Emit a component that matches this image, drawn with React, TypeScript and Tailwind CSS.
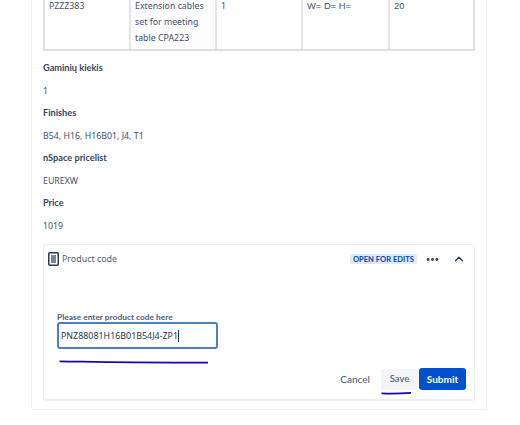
import { ChevronUp, MoreHorizontal } from 'lucide-react'

const font = { fontFamily: '"Noto Sans", sans-serif' }
const bold = { fontFamily: 'Lato, "Noto Sans", sans-serif' }

const cells = [
  { text: 'PZZZ383', width: 'w-[84px]' },
  { text: 'Extension cables set for meeting table CPA223', width: 'w-[86px]' },
  { text: '1', width: 'w-[86px]' },
  { text: 'W= D= H=', width: 'w-[87px]', arial: true },
  { text: '20', width: 'w-[85px]', arial: true },
]

const fields = [
  { label: 'Gaminių kiekis', value: '1' },
  { label: 'Finishes', value: 'B54, H16, H16B01, J4, T1' },
  { label: 'nSpace pricelist', value: 'EUREXW' },
  { label: 'Price', value: '1019' },
]

export default function App() {
  return (
    <div className="h-[425px] w-[520px] overflow-hidden bg-white text-[#42526e]" style={font}>
      <div className="ml-[31px] h-[412px] w-[456px] rounded-b-[3px] border-x border-b border-[#f0f1f3] pl-[11px] pr-[10px]">
        <div className="-mt-[2px] flex h-[53px] w-[432px] border-x-2 border-b-2 border-[#dcdee2]">
          {cells.map((c, i) => (
            <div
              key={c.text}
              className={`${c.width} shrink-0 pl-[4px] pr-[6px] leading-[16px] ${c.arial ? 'text-[9.4px]' : 'text-[8.8px]'} ${i > 0 ? 'border-l-2 border-[#e4e5e8]' : ''} ${i === 1 ? 'bg-[#fdfdfe]' : ''}`}
              style={c.arial ? { fontFamily: '"Liberation Sans", sans-serif' } : undefined}
            >
              {c.text}
            </div>
          ))}
        </div>

        <div className="mt-[9px] flex flex-col">
          {fields.map((f) => (
            <div key={f.label} className="flex flex-col">
              <div className="h-[23px] text-[9.2px] font-bold leading-[16px] text-[#344563]" style={bold}>
                {f.label}
              </div>
              <div className="h-[22px] text-[8.8px] leading-[16px]">{f.value}</div>
            </div>
          ))}
        </div>

        <div className="relative mt-[4px] h-[156px] w-[432px] rounded-[3px] border border-[#eceef0] shadow-[0_1px_1px_rgba(9,30,66,0.06)]">
          <div className="flex h-[28px] items-center pl-[4px] pr-[8px]">
            <svg width="11" height="14" viewBox="0 0 11 14" className="mr-[3px] shrink-0" fill="none">
              <rect x="0.75" y="0.75" width="9.5" height="12.5" rx="1" stroke="#253858" strokeWidth="1.5" />
              <rect x="3" y="3" width="5" height="8" fill="#7a869a" />
            </svg>
            <span className="text-[8.9px] text-[#505f79]">Product code</span>
            <span
              className="ml-auto rounded-[2px] bg-[#deebff] px-[3px] text-[7.6px] font-bold leading-[10px] text-[#0747a6]"
              style={bold}
            >
              OPEN FOR EDITS
            </span>
            <MoreHorizontal size={15} strokeWidth={2.6} className="ml-[8px] text-[#253858]" />
            <ChevronUp size={14} strokeWidth={2.2} className="ml-[12px] text-[#253858]" />
          </div>

          <div className="ml-[13px] mt-[38px] text-[8.4px] font-bold leading-[12px] text-[#505f79]" style={bold}>
            Please enter product code here
          </div>
          <div className="ml-[13px] -mt-[1px] flex h-[27px] w-[161px] items-center rounded-[3px] border-2 border-[#4c7fc4] pl-[2px] text-[8.9px] text-[#253858]">
            PNZ88081H16B01B54J4-ZP1
            <span className="h-[12px] w-px bg-[#172b4d]" />
          </div>

          <div className="absolute bottom-[9px] right-[8px] flex h-[22px] items-center" style={bold}>
            <span className="mr-[11px] text-[10px] font-medium text-[#505f79]">Cancel</span>
            <span className="flex h-[21px] w-[37px] items-center justify-center rounded-[3px] bg-[#f4f5f7] text-[9.5px] font-medium text-[#505f79]">
              Save
            </span>
            <span className="ml-[1px] flex h-[22px] w-[47px] items-center justify-center rounded-[3px] bg-[#0052cc] text-[10px] font-bold text-white">
              Submit
            </span>
          </div>

          {/* pen marks drawn on the screenshot */}
          <svg className="absolute left-[15px] top-[115px]" width="152" height="4" viewBox="0 0 152 4" fill="none">
            <path d="M0.5 1.3 C30 1.6 50 2.8 149 2.6" stroke="#1408b0" strokeWidth="1.8" />
          </svg>
          <svg className="absolute left-[337px] top-[146px]" width="32" height="4" viewBox="0 0 32 4" fill="none">
            <path d="M0.5 2.4 C10 2.8 20 2.6 30 1.8" stroke="#1408b0" strokeWidth="1.8" />
          </svg>
        </div>
      </div>
    </div>
  )
}
